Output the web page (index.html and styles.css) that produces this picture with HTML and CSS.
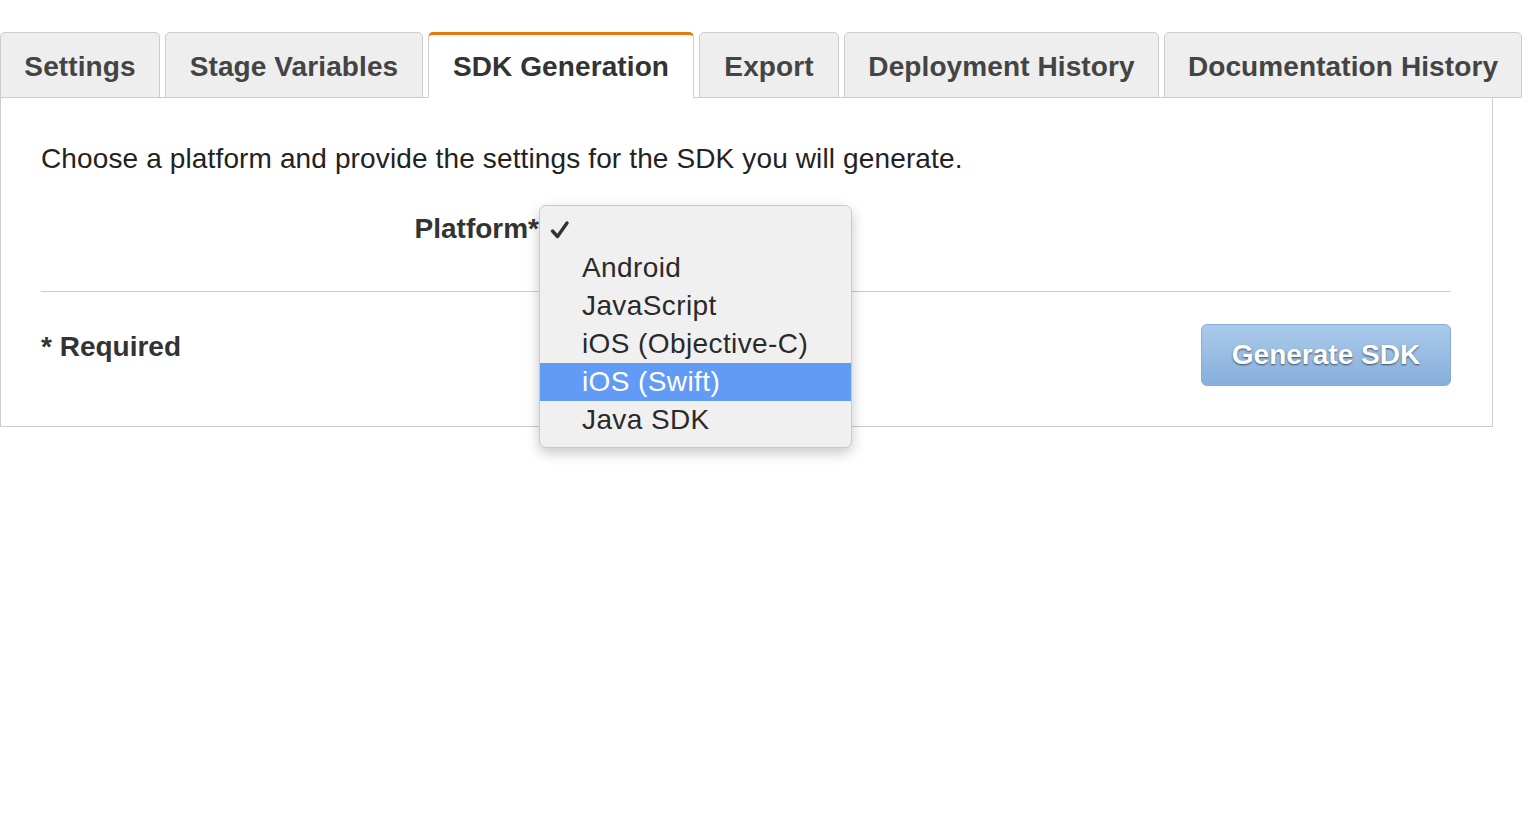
FILE: index.html
```html
<!DOCTYPE html>
<html>
<head>
<meta charset="utf-8">
<link rel="stylesheet" href="styles.css">
</head>
<body>
<div class="page">
  <div class="tabs">
    <div class="tab tab-settings">Settings</div>
    <div class="tab tab-stage">Stage Variables</div>
    <div class="tab tab-sdk active">SDK Generation</div>
    <div class="tab tab-export">Export</div>
    <div class="tab tab-deploy">Deployment History</div>
    <div class="tab tab-docs">Documentation History</div>
  </div>
  <div class="panel">
    <p class="intro">Choose a platform and provide the settings for the SDK you will generate.</p>
    <div class="form-row">
      <label class="label">Platform*</label>
      <div class="select">
        <ul class="menu">
          <li class="item checked">
            <svg class="check" width="22" height="22" viewBox="0 0 22 22"><path d="M2.5 11 L7.5 16.5 L17 3" fill="none" stroke="#333" stroke-width="3.4" stroke-linecap="round" stroke-linejoin="round"/></svg>
          </li>
          <li class="item">Android</li>
          <li class="item">JavaScript</li>
          <li class="item">iOS (Objective-C)</li>
          <li class="item selected">iOS (Swift)</li>
          <li class="item">Java SDK</li>
        </ul>
      </div>
    </div>
    <hr class="divider">
    <div class="footer">
      <div class="required">* Required</div>
      <button class="btn">Generate SDK</button>
    </div>
  </div>
</div>
</body>
</html>
```

FILE: styles.css
```css
html, body {
  margin: 0;
  padding: 0;
  background: #fff;
  height: 100%;
}
body {
  font-family: "Liberation Sans", Arial, Helvetica, sans-serif;
  color: #333;
}
.page {
  width: 1533px;
  min-height: 826px;
  position: relative;
}
.tabs {
  display: flex;
  gap: 5px;
  padding-top: 32px;
  position: relative;
  z-index: 1;
  margin-bottom: -1px;
}
.tab {
  box-sizing: border-box;
  flex: none;
  height: 66px;
  padding-top: 6px;
  border: 1px solid #cccccc;
  border-radius: 5px 5px 0 0;
  background: #eeeeee;
  font-weight: bold;
  font-size: 28px;
  line-height: 56px;
  color: #444;
  white-space: nowrap;
  text-align: center;
  letter-spacing: 0.1px;
}
.tab-settings { width: 160px; }
.tab-stage { width: 258px; }
.tab-sdk { width: 266px; }
.tab-export { width: 140px; }
.tab-deploy { width: 315px; }
.tab-docs { width: 358px; }
.tab.active {
  background: #fff;
  border-top: 3px solid #e47911;
  border-bottom-color: #fff;
  padding-top: 4px;
  color: #333;
}
.panel {
  box-sizing: border-box;
  width: 1493px;
  border: 1px solid #cccccc;
  padding: 0 41px 40px 40px;
}
.intro {
  margin: 44px 0 0 0;
  font-size: 28px;
  line-height: 34px;
  color: #222;
  letter-spacing: 0.13px;
}
.form-row {
  display: flex;
  margin-top: 36px;
  height: 34px;
}
.label {
  width: 498px;
  text-align: right;
  font-weight: bold;
  font-size: 28px;
  line-height: 34px;
  color: #333;
}
.select {
  position: relative;
  width: 0;
  z-index: 5;
}
.menu {
  position: absolute;
  left: 0;
  top: -7px;
  width: 313px;
  box-sizing: border-box;
  margin: 0;
  padding: 5px 0 8px 0;
  list-style: none;
  background: #f0f0f0;
  border: 1px solid #c9c9c9;
  border-radius: 7px;
  box-shadow: 0 5px 14px rgba(0, 0, 0, 0.22);
}
.item {
  height: 38px;
  line-height: 38px;
  padding-left: 42px;
  font-size: 28px;
  color: #2a2a2a;
  white-space: nowrap;
  position: relative;
  letter-spacing: 0.4px;
}
.item.selected {
  background: #629bf6;
  color: #fff;
}
.check {
  position: absolute;
  left: 10px;
  top: 9px;
}
.divider {
  margin: 45px 0 0 0;
  border: 0;
  border-top: 1px solid #cccccc;
  height: 0;
}
.footer {
  display: flex;
  justify-content: space-between;
  align-items: flex-start;
  margin-top: 32px;
}
.required {
  margin-top: 6px;
  font-weight: bold;
  font-size: 28px;
  line-height: 34px;
  color: #333;
}
.btn {
  box-sizing: border-box;
  width: 250px;
  height: 62px;
  border: 1px solid #86acd8;
  border-radius: 6px;
  background: linear-gradient(#abcaea, #86afdc);
  color: #fff;
  font-family: "Liberation Sans", Arial, Helvetica, sans-serif;
  font-weight: bold;
  font-size: 28px;
  text-shadow: 0 1px 2px rgba(0, 0, 0, 0.6);
  padding: 0;
}
```
